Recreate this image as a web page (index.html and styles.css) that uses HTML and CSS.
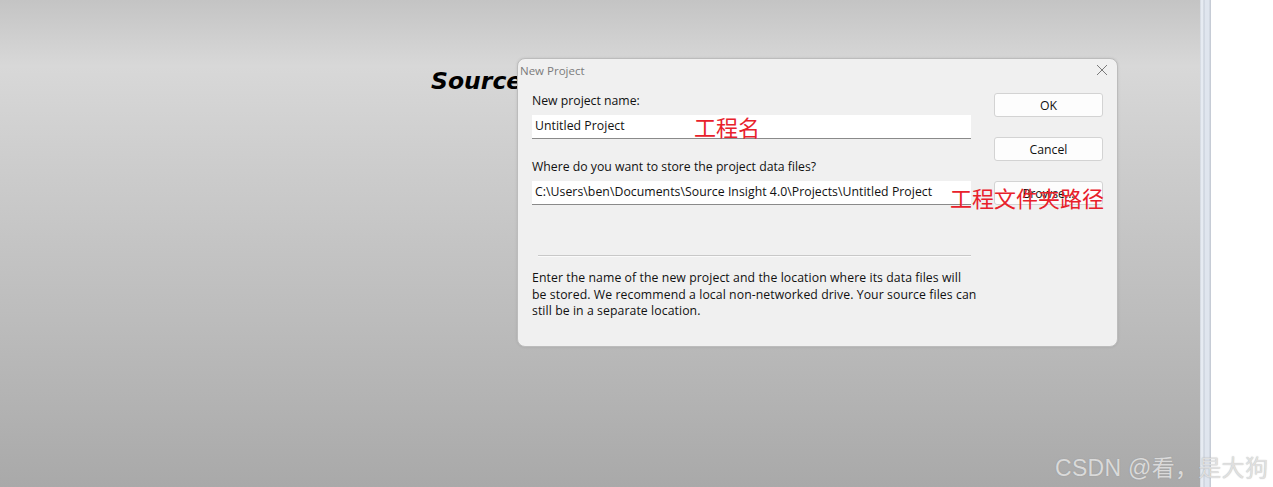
FILE: index.html
```html
<!DOCTYPE html>
<html>
<head>
<meta charset="utf-8">
<link rel="stylesheet" href="styles.css">
</head>
<body>
<div class="screen">
  <div class="workspace">
    <div class="app-title">Source Insight</div>
    <div class="dialog">
      <div class="titlebar">
        <span class="title">New Project</span>
        <svg class="close" width="12" height="12" viewBox="0 0 12 12"><path d="M1 1 L11 11 M11 1 L1 11" stroke="#7a7a7a" stroke-width="1" fill="none"/></svg>
      </div>
      <div class="body">
        <div class="form">
          <label class="label">New project name:</label>
          <div class="field">Untitled Project</div>
          <label class="label second">Where do you want to store the project data files?</label>
          <div class="field">C:\Users\ben\Documents\Source Insight 4.0\Projects\Untitled Project</div>
          <div class="separator"></div>
          <p class="help">Enter the name of the new project and the location where its data files will<br>be stored. We recommend a local non-networked drive. Your source files can<br>still be in a separate location.</p>
        </div>
        <div class="buttons">
          <button class="btn">OK</button>
          <button class="btn">Cancel</button>
          <button class="btn">Browse...</button>
        </div>
      </div>
      <span class="note note-name">工程名</span>
      <span class="note note-path">工程文件夹路径</span>
    </div>
  </div>
  <div class="splitter"></div>
  <div class="pane"></div>
  <div class="watermark">CSDN @看，是大狗</div>
</div>
</body>
</html>
```
FILE: styles.css
```css
* { box-sizing: border-box; }
html, body { margin: 0; padding: 0; }
body { width: 1273px; height: 487px; overflow: hidden; }

.screen {
  position: relative;
  display: flex;
  width: 1273px;
  height: 487px;
}

.workspace {
  position: relative;
  width: 1200px;
  height: 100%;
  background: linear-gradient(to bottom, #c4c4c4 0px, #d8d8d8 66px, #cbcbcb 180px, #bcbcbc 320px, #a9a9a9 487px);
}

.splitter {
  width: 11px;
  height: 100%;
  background: linear-gradient(to right, #c9ced6 0, #e6ebf2 1px, #e6ebf2 3px, #c3cad5 4px, #dfe5ee 5px, #dfe5ee 9px, #c6ccd6 10px);
}

.pane {
  flex: 1;
  background: #ffffff;
}

.app-title {
  position: absolute;
  left: 431px;
  top: 67px;
  font-family: "DejaVu Sans", Verdana, sans-serif;
  font-weight: bold;
  font-style: italic;
  font-size: 23.5px;
  color: #000;
}

.dialog {
  position: absolute;
  left: 517px;
  top: 58px;
  width: 601px;
  height: 289px;
  background: #f0f0f0;
  border: 1px solid #bcbcbc;
  border-radius: 8px;
  box-shadow: 0 0 3px rgba(0,0,0,0.10);
  font-family: "Open Sans", "Noto Sans", sans-serif;
  color: #111;
}

.titlebar {
  display: flex;
  align-items: center;
  justify-content: space-between;
  height: 22px;
  padding: 0 9px 0 2px;
}

.title {
  font-size: 11.5px;
  line-height: 14px;
  color: #7b7b7b;
  margin-top: 1px;
}

.body {
  display: flex;
  padding: 12px 14px 0 14px;
  gap: 23px;
}

.form {
  width: 439px;
  display: flex;
  flex-direction: column;
}

.label {
  font-size: 12.25px;
  line-height: 16px;
  height: 18px;
}

.label.second { margin-top: 20px; }

.field {
  margin-top: 4px;
  height: 24px;
  background: #ffffff;
  border-bottom: 1px solid #8a8a8a;
  font-size: 12.25px;
  line-height: 22px;
  padding-left: 3px;
  letter-spacing: 0.05px;
  white-space: nowrap;
  overflow: hidden;
}

.separator {
  margin: 50px 0 0 6px;
  height: 2px;
  background: #c8c8c8;
  border-bottom: 1px solid #fafafa;
}

.help {
  margin: 13px 0 0 0;
  font-size: 12.25px;
  line-height: 16.5px;
  letter-spacing: 0.08px;
  white-space: nowrap;
}

.buttons {
  display: flex;
  flex-direction: column;
  gap: 20px;
  padding-top: 0;
}

.btn {
  width: 109px;
  height: 24px;
  background: #fdfdfd;
  border: 1px solid #d3d3d3;
  border-radius: 3px;
  font-family: "Open Sans", "Noto Sans", sans-serif;
  font-size: 12.25px;
  color: #111;
  padding: 0;
}

.note {
  position: absolute;
  font-family: "Noto Sans CJK SC", sans-serif;
  color: #e8212b;
  font-size: 22px;
  line-height: 24px;
}

.note-name { left: 176px; top: 55px; }
.note-path { left: 432px; top: 126px; }

.watermark {
  position: absolute;
  left: 1055px;
  top: 449px;
  font-family: "Liberation Sans", "Noto Sans CJK SC", sans-serif;
  font-size: 23px;
  color: rgba(232,232,232,0.85);
  text-shadow: 0 0 1px rgba(120,120,120,0.6);
  letter-spacing: 0.3px;
}
```
